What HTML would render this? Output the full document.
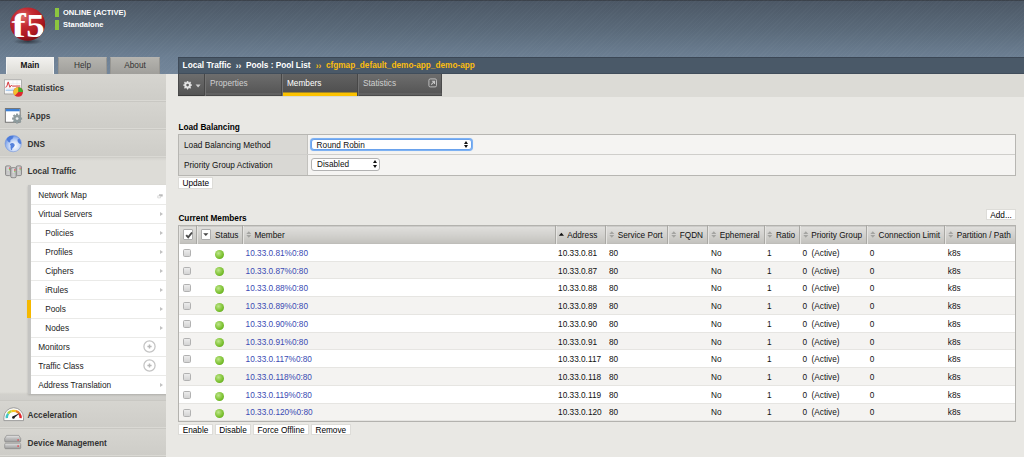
<!DOCTYPE html>
<html lang="en">
<head>
<meta charset="utf-8">
<title>BIG-IP - Pool Members</title>
<style>
*{box-sizing:border-box;margin:0;padding:0}
html,body{width:1024px;height:457px;overflow:hidden}
body{font-family:"Liberation Sans",sans-serif;font-size:8.25px;color:#111;background:#e9e8e4;position:relative}
/* header */
#banner{z-index:2;position:absolute;left:0;top:0;width:1024px;height:73.75px;background:linear-gradient(#3b424b 0,#3b424b 1px,#4c5866 1.5px,#5a6a7a 30px,#6c7f93 57px,#73869a 74px);overflow:hidden}
#banner .stripes{position:absolute;inset:0;background:repeating-linear-gradient(135deg,rgba(255,255,255,.018) 0,rgba(255,255,255,.018) 1px,rgba(0,0,0,0) 1px,rgba(0,0,0,0) 3px)}
#logo{position:absolute;left:0;top:0}
.st{position:absolute;left:55px;width:4px;background:#8cc63f}
.sttxt{position:absolute;left:63px;font-weight:bold;color:#fff;font-size:7.5px;line-height:10px;white-space:nowrap}
/* top tabs */
.ttab{z-index:3;position:absolute;top:57px;height:17px;line-height:15.8px;text-align:center;font-size:8.25px;color:#333;background:linear-gradient(#b4b3ae,#a09f9b);border:1px solid #979692;border-top-color:#b5b4b0;border-bottom:none}
.ttab.on{background:linear-gradient(#f2f1ee,#dddcd7);font-weight:bold;color:#111;border-color:#f4f4f2}
/* breadcrumb */
#crumb{z-index:3;position:absolute;left:178px;top:57px;width:846px;height:17px;background:#4a5968;border-top:1px solid #3b4755;border-left:1px solid #3f4b59;box-shadow:inset 0 -1px 0 #404d5b;color:#fff;font-weight:bold;font-size:8.25px;line-height:16px;padding-left:4px;white-space:nowrap}
#crumb .ct{display:inline-block;transform:translate(-.4px,.45px)}
#crumb .y{color:#fbbd0f}
#crumb .sep{font-weight:bold;padding:0 2.3px;position:relative;top:1px}
/* sub tab bar */
#tabstrip{position:absolute;left:178px;top:74px;width:846px;height:22.5px;background:#dcdbd6}
#subtabs{position:absolute;left:178px;top:74px;width:264px;height:22.3px;background:linear-gradient(#6d6d6d,#545454);border-bottom:1px solid #3d3d3d;box-shadow:inset 1px 0 0 #4a4a4a,inset -1px 0 0 #4a4a4a}
#subtabs div{position:absolute;top:0;height:21.5px;line-height:20px;font-size:8.25px;color:#d0d0d0;border-left:1px solid #474747;box-shadow:inset 1px 0 0 #727272,inset 0 -3px 0 rgba(255,255,255,.07);padding-left:5px}
#subtabs div.gear{border-left:none;box-shadow:none;padding:0}
#subtabs .on{color:#fff;background:linear-gradient(#626262,#4c4c4c);box-shadow:inset 1px 0 0 #727272,inset 0 -3.4px 0 #fcc200}
#subtabs svg{position:absolute}
/* sidebar */
#side{position:absolute;left:0;top:73px;width:165.6px;height:384px;background:#d4d3ce;overflow:hidden}
.acc{position:absolute;left:0;width:166px;height:28px;background:linear-gradient(#c9c8c3 0,#c9c8c3 1px,#d6d5d0 1px,#cecdc8 27px,#dad9d4 27px);font-weight:bold;font-size:8.25px;color:#333;line-height:31.2px;padding-left:27.5px;white-space:nowrap}
.acc svg{position:absolute;left:0;top:0}
#ltopen{position:absolute;left:0;top:84px;width:166px;height:243px;background:linear-gradient(#cac9c4 0,#d6d5d0 1.5px,#dddcd7 4px,#dddcd7 235px,#d2d1cc 237px,#cfceca 243px)}
#ltopen .acc{background:none;top:0;line-height:29.2px}
#menu{position:absolute;left:27.5px;top:112px;width:139px;height:209px;padding-top:1px;background:#fff;border-left:3.2px solid #c4c4c2;box-shadow:0 1px 2px rgba(0,0,0,.18)}
#menu div{height:19px;line-height:20.2px;background:linear-gradient(#fff 0,#fff 18px,#eaeae8 18px);font-size:8.25px;color:#222;padding-left:7.7px;position:relative;white-space:nowrap}
#menu div.sub{padding-left:14.7px}
#menu div:last-child{background:#fff;height:18px}
#menu div.cur:before{content:"";position:absolute;left:-3.2px;top:0;width:3.4px;height:18px;background:#f5b800}
#menu i{position:absolute;right:3.9px;top:7.1px;width:0;height:0;border-left:3px solid #c2c2c2;border-top:2.5px solid transparent;border-bottom:2.5px solid transparent}
#menu svg.pl{position:absolute;right:11px;top:2.3px}
/* main */
h3{position:absolute;font-size:8.25px;font-weight:bold;color:#000;white-space:nowrap}
.btn{appearance:none;-webkit-appearance:none;padding:0;margin:0;font-family:inherit;border-radius:0;display:block;cursor:pointer;position:absolute;height:11px;line-height:11.6px;background:#fff;border:1px solid #dddcd8;font-size:8.25px;color:#000;text-align:center;white-space:nowrap}
#lb{position:absolute;left:178px;top:133.6px;width:838.3px;height:42px;border:1px solid #b7b6b2;background:linear-gradient(#f5f4f2 0,#f5f4f2 19.2px,#cfcecb 19.2px,#cfcecb 20.1px,#f5f4f2 20.1px)}
#lb .lab{position:absolute;left:0;width:128.6px;background:#d9d8d4;padding-left:5px;font-size:8.25px;border-right:1px solid #c2c1bd;white-space:nowrap}
.sel{position:absolute;background:#fff;border:1px solid #b2b2b2;border-radius:3px;font-size:8.25px;line-height:12px;padding-left:5px;white-space:nowrap;height:12.2px}
.sel:before,.sel:after{content:"";position:absolute;right:2.3px;width:0;height:0;border-left:2px solid transparent;border-right:2px solid transparent}
.sel:before{top:calc(50% - 4.1px);border-bottom:3.5px solid #111}
.sel:after{top:calc(50% + .6px);border-top:3.4px solid #111}
.sel.foc:before,.sel.foc:after{right:3px}
.sel.foc{border-color:#6aa2ec;box-shadow:0 0 0 1px #7db1f3,0 0 1px 1px rgba(125,177,243,.45);height:11.6px;line-height:11.2px}
table{position:absolute;left:177.8px;top:225px;width:838.3px;border-collapse:collapse;border:1px solid #b3b2ae;font-size:8.25px;table-layout:fixed}
th{height:18.3px;background:linear-gradient(#e0dfdc 0,#d3d2cf 45%,#c3c2be 92%,#b4b3af 100%);font-weight:normal;text-align:left;border-left:1px solid #a9a8a4;color:#111;white-space:nowrap;padding:1.5px 0 0 11.3px;box-shadow:inset 1px 0 0 #e6e5e2;position:relative;line-height:10px}
th svg{position:absolute;left:2.8px;top:5.4px}
th .hb{position:absolute;top:3.1px;width:10.4px;height:10.6px;background:#fff;border:1px solid #adadad;border-radius:1px}
td{height:17.765px;padding:1.6px 0 0 3px;white-space:nowrap;background:#fff;position:relative;box-shadow:inset 0 -1px 0 #e6e5e2}
tr:nth-child(odd) td{background:#f4f3f1}
td a{color:#3a4ab3;text-decoration:none}
.cb{position:absolute;left:4.6px;top:5.2px;width:7.6px;height:7.8px;border:1px solid #b1b1b1;border-radius:1.6px;background:linear-gradient(#ececec,#d4d4d4)}
.dot{position:absolute;left:18.2px;top:5.8px;width:9px;height:9px;border-radius:50%;background:radial-gradient(circle at 38% 36%,#bfe690 0,#9bd259 30%,#7bc030 58%,#68b222 74%,#509f18 90%,#56a51c 100%)}
</style>
</head>
<body>
<div id="banner"><div class="stripes"></div>
<svg id="logo" viewBox="0 0 56 50" width="56" height="50"><defs><radialGradient id="lg" cx="38%" cy="28%" r="75%"><stop offset="0" stop-color="#dc6a6a"/><stop offset=".35" stop-color="#c52c33"/><stop offset=".75" stop-color="#ac1820"/><stop offset="1" stop-color="#7a1016"/></radialGradient><radialGradient id="sh" cx="50%" cy="50%" r="50%"><stop offset="0" stop-color="#20262e" stop-opacity=".75"/><stop offset="1" stop-color="#20262e" stop-opacity="0"/></radialGradient><clipPath id="lc"><ellipse cx="27.6" cy="24.2" rx="17.5" ry="16.6"/></clipPath></defs><ellipse cx="28" cy="41.5" rx="15" ry="3.2" fill="url(#sh)"/><ellipse cx="27.6" cy="24.2" rx="17.5" ry="16.6" fill="url(#lg)"/><g clip-path="url(#lc)" font-family="Liberation Serif,serif" font-weight="bold" fill="#fff"><text transform="translate(11.400,36.700) scale(1.24,1)" font-size="34.500">f</text><text x="26.3" y="36.8" font-size="33" textLength="18.5" lengthAdjust="spacingAndGlyphs">5</text></g></svg>
<div class="st" style="top:8px;height:9px"></div><div class="st" style="top:20px;height:10px"></div>
<div class="sttxt" style="top:8px">ONLINE (ACTIVE)</div><div class="sttxt" style="top:20px">Standalone</div>
</div>
<div class="ttab on" style="left:6px;width:48px">Main</div>
<div class="ttab" style="left:58px;width:49px">Help</div>
<div class="ttab" style="left:110px;width:50px">About</div>
<div id="crumb"><span class="ct">Local Traffic <span class="sep">››</span> Pools : Pool List <span class="sep y" style="margin-left:.7px">››</span> <span class="y">cfgmap_default_demo-app_demo-app</span></span></div>
<div id="tabstrip"></div>
<div id="subtabs">
<div class="gear" style="left:0;width:26px"><svg style="left:5px;top:6.5px" width="20" height="10" viewBox="0 0 20 10"><g fill="#e4e4e4"><g transform="translate(4.600,4.100)"><polygon points="0.00,-4.40 1.11,-2.68 3.11,-3.11 2.68,-1.11 4.40,0.00 2.68,1.11 3.11,3.11 1.11,2.68 0.00,4.40 -1.11,2.68 -3.11,3.11 -2.68,1.11 -4.40,0.00 -2.68,-1.11 -3.11,-3.11 -1.11,-2.68" fill="#e6e6e6" stroke="#e6e6e6" stroke-width=".5" stroke-linejoin="round"/><circle r="1.35" fill="#5c5c5c"/></g><path d="M12.6 3.6h5l-2.5 3z" fill="#cfcfcf"/></g></svg></div>
<div style="left:26px;width:77px">Properties</div>
<div class="on" style="left:103px;width:76px">Members</div>
<div style="left:179px;width:85px">Statistics<svg style="left:70.1px;top:4.4px" width="10" height="10" viewBox="0 0 10 10"><rect x=".9" y=".9" width="7.6" height="8" rx="1.4" fill="none" stroke="#c6c6c6" stroke-width=".9"/><path d="M3.2 6.6l3-3M3.9 3.3h2.6v2.6" fill="none" stroke="#c6c6c6" stroke-width="1.1"/></svg></div>
</div>
<div id="side">
<div class="acc" style="top:0"><svg width="30" height="28" viewBox="0 0 30 28"><rect x="4.9" y="7.4" width="17" height="14" fill="#000" opacity=".12"/><rect x="4.4" y="6.8" width="17" height="14.1" fill="#fdfdfd" stroke="#9d9d9d" stroke-width=".7"/><path d="M5.5 10.5h15M5.5 15.5h15M5.5 19h15M9 7.5v13M13 7.5v13M17 7.5v13" stroke="#e3e6ec" stroke-width=".5"/><path d="M5.6 17.2h9" stroke="#9fc3ea" stroke-width="1.3"/><path d="M5.4 14.3l1.3-.6 1.5-4.8 1.7 5.4 1.3-2 1.3.8 7.8-.1" fill="none" stroke="#d8383c" stroke-width="1"/><circle cx="18.2" cy="19" r="4.8" fill="#dc2b30"/><path d="M18.2 19V14.2A4.8 4.8 0 0 1 23 19z" fill="#3fae2a"/><path d="M18.2 19V14.2A4.8 4.8 0 0 0 15 22.6z" fill="#f2c230"/></svg>Statistics</div>
<div class="acc" style="top:28px"><svg width="30" height="28" viewBox="0 0 30 28"><rect x="5.3" y="7.6" width="14.8" height="13.6" fill="#fff" stroke="#5c5c5c" stroke-width=".8"/><rect x="5.7" y="8" width="14" height="2.3" fill="#3d80d6"/><g transform="translate(17.1,17.6)" fill="#8f9c9e"><circle r="3.7"/><g id="gt"><rect x="-1.1" y="-5" width="2.2" height="10"/><rect x="-5" y="-1.1" width="10" height="2.2"/></g><use href="#gt" transform="rotate(45)"/><circle r="1.4" fill="#e9eded"/></g></svg>iApps</div>
<div class="acc" style="top:56px"><svg width="30" height="28" viewBox="0 0 30 28"><defs><radialGradient id="gl" cx="58%" cy="64%" r="62%"><stop offset="0" stop-color="#ffffff"/><stop offset=".45" stop-color="#d3e0f8"/><stop offset=".8" stop-color="#98b6ee"/><stop offset="1" stop-color="#6f96e4"/></radialGradient></defs><circle cx="13.200" cy="14.600" r="8.200" fill="url(#gl)" stroke="#6a8fdc" stroke-width=".5"/><g fill="#4a79da" opacity=".92"><path d="M6.800 10.200c.8-1.400 2-2.500 3.400-3.100l2.300-.2 1.500.9-1.300.9-.2 1.200-1.500.5-.9 1.500.4 1-1.400.5-1.500-1.300z"/><path d="M10.900 14.300l1.700-.4 1.600.9.600 1.500-.9 1.700-1.500 1.300-.5 1.900-.9-.4-.5-2.300.2-1.700-.8-1.300z"/><path d="M17.400 10.800l1.600-1.300 1.400 1.600.8 2.300-.5 1.800-1.500-.6-1.300-1.700z"/></g></svg>DNS</div>
<div id="ltopen">
<div class="acc"><svg width="30" height="28" viewBox="0 0 30 28"><defs><linearGradient id="tw" x1="0" x2="1"><stop offset="0" stop-color="#b4b4b4"/><stop offset=".5" stop-color="#dadada"/><stop offset="1" stop-color="#bcbcbc"/></linearGradient></defs><g stroke="#858585" stroke-width=".9" fill="url(#tw)"><rect x="5.500" y="8.900" width="5.300" height="9.700" rx="1.300"/><rect x="16.200" y="8.900" width="5.300" height="9.700" rx="1.300"/><rect x="10.700" y="10.700" width="5.500" height="10" rx="1.300"/></g><path d="M6.700 14.500h2.900M6.700 15.800h2.900M6.700 17.100h2.900M17.400 14.500h2.900M17.400 15.800h2.900M17.400 17.100h2.900M12 16.500h2.900M12 17.800h2.900M12 19.100h2.900" stroke="#b9b9b9" stroke-width=".5"/><g fill="#e8303a"><circle cx="9.500" cy="11.100" r=".7"/><circle cx="14.800" cy="13" r=".7"/><circle cx="20.100" cy="11.100" r=".7"/></g><g fill="#6fd04a"><circle cx="9.500" cy="12.700" r=".65"/><circle cx="14.800" cy="14.600" r=".65"/><circle cx="20.100" cy="12.700" r=".65"/></g></svg>Local Traffic</div>
</div>
<div id="menu">
<div>Network Map<svg style="position:absolute;right:3.600px;top:6.500px" width="6" height="6" viewBox="0 0 6 6"><path d="M2 1.300h3.700v2.200H2z" fill="#b9b9b9"/><path d="M.7 2.800h2.900v2.100H.7z" fill="#fafafa" stroke="#c4c4c4" stroke-width=".5"/></svg></div><div>Virtual Servers<i></i></div><div class="sub">Policies<i></i></div><div class="sub">Profiles<i></i></div><div class="sub">Ciphers<i></i></div><div class="sub">iRules<i></i></div><div class="sub cur">Pools<i></i></div><div class="sub">Nodes<i></i></div><div>Monitors<svg class="pl" width="13" height="13" viewBox="0 0 13 13"><circle cx="6.500" cy="6.500" r="5.600" fill="none" stroke="#c4c4c4" stroke-width="1.250"/><path d="M4.400 6.500h4.200M6.500 4.400v4.200" stroke="#b8b8b8" stroke-width="1.450"/></svg></div><div>Traffic Class<svg class="pl" width="13" height="13" viewBox="0 0 13 13"><circle cx="6.500" cy="6.500" r="5.600" fill="none" stroke="#c4c4c4" stroke-width="1.250"/><path d="M4.400 6.500h4.200M6.500 4.400v4.200" stroke="#b8b8b8" stroke-width="1.450"/></svg></div><div>Address Translation<i></i></div>
</div>
<div class="acc" style="top:327px"><svg width="30" height="28" viewBox="0 0 30 28"><path d="M3.900 20.600v-3.100a9.800 9.800 0 0 1 19.600 0v3.100z" fill="#fbfbfb" stroke="#8c8c8c" stroke-width=".8"/><g fill="none" stroke-width="2.400"><path d="M6.800 18.200a6.900 6.900 0 0 1 1.300-4.600" stroke="#3fc4c4"/><path d="M8.100 13.600a6.900 6.900 0 0 1 3.400-2.400" stroke="#b5d334"/><path d="M11.500 11.200a6.900 6.900 0 0 1 4.400 0" stroke="#f4c51e"/><path d="M15.900 11.200a6.900 6.900 0 0 1 3.400 2.400" stroke="#ef7d22"/><path d="M19.300 13.600a6.900 6.900 0 0 1 1.300 4.600" stroke="#e0242c"/></g><path d="M12.600 16.500l7.800-3.700-6.600 5.400z" fill="#1c1c1c"/><circle cx="13.400" cy="17.500" r="1.300" fill="#1c1c1c"/></svg>Acceleration</div>
<div class="acc" style="top:383px"></div>
<div class="acc" style="top:355px"><svg width="30" height="28" viewBox="0 0 30 28"><defs><linearGradient id="sl" x1="0" y1="0" x2="0" y2="1"><stop offset="0" stop-color="#e6e6e6"/><stop offset=".4" stop-color="#c2c2c2"/><stop offset="1" stop-color="#9c9c9c"/></linearGradient></defs><g fill="url(#sl)" stroke="#7f7f7f" stroke-width=".6"><path d="M6.600 7.400h12.200l1.900 3v2.600a1 1 0 0 1-1 1H5.700a1 1 0 0 1-1-1v-2.600z"/><path d="M5.700 15.300h14a1 1 0 0 1 1 1v3.400a1 1 0 0 1-1 1h-14a1 1 0 0 1-1-1v-3.400a1 1 0 0 1 1-1z"/></g><circle cx="18.100" cy="12" r=".8" fill="#e8303a"/><circle cx="18.100" cy="18.100" r=".8" fill="#e8303a"/></svg>Device Management</div>
</div>
<h3 style="left:178.4px;top:123px">Load Balancing</h3>
<div id="lb">
<div class="lab" style="top:0;height:19.2px;line-height:21px">Load Balancing Method</div>
<div class="lab" style="top:20.1px;height:19.9px;line-height:21.2px">Priority Group Activation</div>
<div class="sel foc" style="left:131.6px;top:4.3px;width:161.6px">Round Robin</div>
<div class="sel" style="left:132px;top:23.8px;width:68.8px">Disabled</div>
</div>
<button type="button" class="btn" style="left:178.3px;top:177.4px;width:35px;height:11.3px">Update</button>
<h3 style="left:178.4px;top:214.4px">Current Members</h3>
<button type="button" class="btn" style="left:986px;top:208.8px;width:30px">Add...</button>
<button type="button" class="btn" style="left:178.2px;top:424.4px;width:34.6px">Enable</button>
<button type="button" class="btn" style="left:215.2px;top:424.4px;width:35.6px">Disable</button>
<button type="button" class="btn" style="left:253.4px;top:424.4px;width:55.4px">Force Offline</button>
<button type="button" class="btn" style="left:311px;top:424.4px;width:39.6px">Remove</button>
<table>
<colgroup><col style="width:18.5px"><col style="width:45.8px"><col style="width:312.5px"><col style="width:50.8px"><col style="width:62px"><col style="width:40.1px"><col style="width:56.1px"><col style="width:35.3px"><col style="width:67.4px"><col style="width:78.1px"><col></colgroup>
<tr><th style="padding:0;border-left:none"><span class="hb" style="left:4.2px"><svg style="left:.6px;top:.7px" width="8" height="8" viewBox="0 0 8 8"><path d="M1.200 4.100l2 2.200L7 1.500" fill="none" stroke="#4a4a4a" stroke-width="1.900"/></svg></span></th><th style="padding-left:17.800px"><span class="hb" style="left:3.500px"><svg style="left:1.700px;top:3.300px" width="6" height="4" viewBox="0 0 6 4"><path d="M.2.200h5.200L2.800 3z" fill="#444"/></svg></span>Status</th><th><svg width="6" height="7" viewBox="0 0 6 7"><path d="M.3 3L2.800.2 5.300 3zM.3 3.900L2.800 6.700 5.300 3.900z" fill="#a4a4a1"/></svg>Member</th><th style="padding-left:11.600px"><svg width="6" height="7" viewBox="0 0 6 7"><path d="M.8 4.800L3.400 1.800 6 4.800z" fill="#111"/></svg>Address</th><th><svg width="6" height="7" viewBox="0 0 6 7"><path d="M.3 3L2.800.2 5.300 3zM.3 3.900L2.800 6.700 5.300 3.900z" fill="#a4a4a1"/></svg>Service Port</th><th><svg width="6" height="7" viewBox="0 0 6 7"><path d="M.3 3L2.800.2 5.300 3zM.3 3.900L2.800 6.700 5.300 3.900z" fill="#a4a4a1"/></svg>FQDN</th><th><svg width="6" height="7" viewBox="0 0 6 7"><path d="M.3 3L2.800.2 5.300 3zM.3 3.900L2.800 6.700 5.300 3.900z" fill="#a4a4a1"/></svg>Ephemeral</th><th><svg width="6" height="7" viewBox="0 0 6 7"><path d="M.3 3L2.800.2 5.300 3zM.3 3.900L2.800 6.700 5.300 3.900z" fill="#a4a4a1"/></svg>Ratio</th><th><svg width="6" height="7" viewBox="0 0 6 7"><path d="M.3 3L2.800.2 5.300 3zM.3 3.900L2.800 6.700 5.300 3.900z" fill="#a4a4a1"/></svg>Priority Group</th><th><svg width="6" height="7" viewBox="0 0 6 7"><path d="M.3 3L2.800.2 5.300 3zM.3 3.900L2.800 6.700 5.300 3.900z" fill="#a4a4a1"/></svg>Connection Limit</th><th><svg width="6" height="7" viewBox="0 0 6 7"><path d="M.3 3L2.800.2 5.300 3zM.3 3.900L2.800 6.700 5.300 3.900z" fill="#a4a4a1"/></svg>Partition / Path</th></tr>
<tr><td><span class="cb"></span></td><td><span class="dot"></span></td><td><a>10.33.0.81%0:80</a></td><td>10.33.0.81</td><td>80</td><td></td><td>No</td><td>1</td><td>0 &nbsp;(Active)</td><td>0</td><td>k8s</td></tr>
<tr><td><span class="cb"></span></td><td><span class="dot"></span></td><td><a>10.33.0.87%0:80</a></td><td>10.33.0.87</td><td>80</td><td></td><td>No</td><td>1</td><td>0 &nbsp;(Active)</td><td>0</td><td>k8s</td></tr>
<tr><td><span class="cb"></span></td><td><span class="dot"></span></td><td><a>10.33.0.88%0:80</a></td><td>10.33.0.88</td><td>80</td><td></td><td>No</td><td>1</td><td>0 &nbsp;(Active)</td><td>0</td><td>k8s</td></tr>
<tr><td><span class="cb"></span></td><td><span class="dot"></span></td><td><a>10.33.0.89%0:80</a></td><td>10.33.0.89</td><td>80</td><td></td><td>No</td><td>1</td><td>0 &nbsp;(Active)</td><td>0</td><td>k8s</td></tr>
<tr><td><span class="cb"></span></td><td><span class="dot"></span></td><td><a>10.33.0.90%0:80</a></td><td>10.33.0.90</td><td>80</td><td></td><td>No</td><td>1</td><td>0 &nbsp;(Active)</td><td>0</td><td>k8s</td></tr>
<tr><td><span class="cb"></span></td><td><span class="dot"></span></td><td><a>10.33.0.91%0:80</a></td><td>10.33.0.91</td><td>80</td><td></td><td>No</td><td>1</td><td>0 &nbsp;(Active)</td><td>0</td><td>k8s</td></tr>
<tr><td><span class="cb"></span></td><td><span class="dot"></span></td><td><a>10.33.0.117%0:80</a></td><td>10.33.0.117</td><td>80</td><td></td><td>No</td><td>1</td><td>0 &nbsp;(Active)</td><td>0</td><td>k8s</td></tr>
<tr><td><span class="cb"></span></td><td><span class="dot"></span></td><td><a>10.33.0.118%0:80</a></td><td>10.33.0.118</td><td>80</td><td></td><td>No</td><td>1</td><td>0 &nbsp;(Active)</td><td>0</td><td>k8s</td></tr>
<tr><td><span class="cb"></span></td><td><span class="dot"></span></td><td><a>10.33.0.119%0:80</a></td><td>10.33.0.119</td><td>80</td><td></td><td>No</td><td>1</td><td>0 &nbsp;(Active)</td><td>0</td><td>k8s</td></tr>
<tr><td><span class="cb"></span></td><td><span class="dot"></span></td><td><a>10.33.0.120%0:80</a></td><td>10.33.0.120</td><td>80</td><td></td><td>No</td><td>1</td><td>0 &nbsp;(Active)</td><td>0</td><td>k8s</td></tr>
</table>
</body>
</html>
